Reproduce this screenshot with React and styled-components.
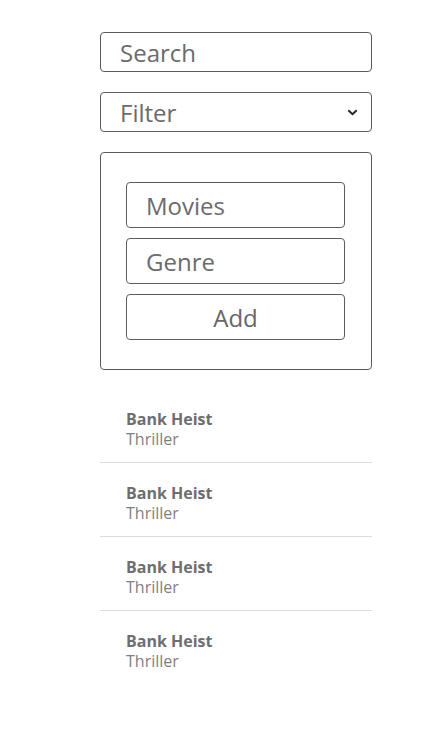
import styled, { createGlobalStyle } from 'styled-components';

const GlobalStyle = createGlobalStyle`
  body {
    margin: 0;
    background: #ffffff;
    font-family: 'Open Sans', 'Liberation Sans', sans-serif;
  }
`;

const Page = styled.div`
  width: 272px;
  margin: 32px 0 0 100px;
  display: flex;
  flex-direction: column;
`;

const Field = styled.input`
  box-sizing: border-box;
  width: 100%;
  height: ${(p) => p.$height || 40}px;
  border: 1px solid #5c5c5c;
  border-radius: 4px;
  padding: 0 19px;
  font-family: inherit;
  font-size: 24px;
  color: #666;
  background: #fff;
  outline: none;

  &::placeholder {
    color: #6b6b6b;
  }
`;

const SelectWrap = styled.div`
  position: relative;
  margin-top: 20px;
`;

const Select = styled.select`
  box-sizing: border-box;
  width: 100%;
  height: 40px;
  border: 1px solid #5c5c5c;
  border-radius: 4px;
  padding: 0 19px;
  font-family: inherit;
  font-size: 24px;
  color: #6b6b6b;
  background: #fff;
  appearance: none;
  outline: none;
`;

const Chevron = styled.svg`
  position: absolute;
  right: 14px;
  top: 17px;
  pointer-events: none;
`;

const FormBox = styled.div`
  margin-top: 20px;
  border: 1px solid #5c5c5c;
  border-radius: 4px;
  padding: 29px 26px 29px 25px;
  display: flex;
  flex-direction: column;
  gap: 10px;
`;

const AddButton = styled.button`
  box-sizing: border-box;
  width: 100%;
  height: 46px;
  border: 1px solid #5c5c5c;
  border-radius: 4px;
  font-family: inherit;
  font-size: 24px;
  color: #666;
  background: #fff;
  cursor: pointer;
`;

const List = styled.ul`
  list-style: none;
  margin: 19px 0 0;
  padding: 0;
`;

const Item = styled.li`
  padding: 20px 26px 13px;
  border-bottom: 1px solid ${(p) => (p.$last ? 'transparent' : '#dcdcdc')};
  line-height: 20px;
`;

const Title = styled.div`
  font-size: 16px;
  font-weight: 700;
  color: #6e6e6e;
`;

const Genre = styled.div`
  font-size: 16px;
  color: #808080;
`;

const movies = [
  { title: 'Bank Heist', genre: 'Thriller' },
  { title: 'Bank Heist', genre: 'Thriller' },
  { title: 'Bank Heist', genre: 'Thriller' },
  { title: 'Bank Heist', genre: 'Thriller' },
];

export default function App() {
  return (
    <>
      <GlobalStyle />
      <Page>
        <Field placeholder="Search" />

        <SelectWrap>
          <Select defaultValue="">
            <option value="">Filter</option>
          </Select>
          <Chevron width="11" height="7" viewBox="0 0 11 7">
            <path d="M1.3 1.3 L5.5 5.3 L9.7 1.3" fill="none" stroke="#222" strokeWidth="1.9" />
          </Chevron>
        </SelectWrap>

        <FormBox>
          <Field $height={46} placeholder="Movies" />
          <Field $height={46} placeholder="Genre" />
          <AddButton>Add</AddButton>
        </FormBox>

        <List>
          {movies.map((m, i) => (
            <Item key={i} $last={i === movies.length - 1}>
              <Title>{m.title}</Title>
              <Genre>{m.genre}</Genre>
            </Item>
          ))}
        </List>
      </Page>
    </>
  );
}
